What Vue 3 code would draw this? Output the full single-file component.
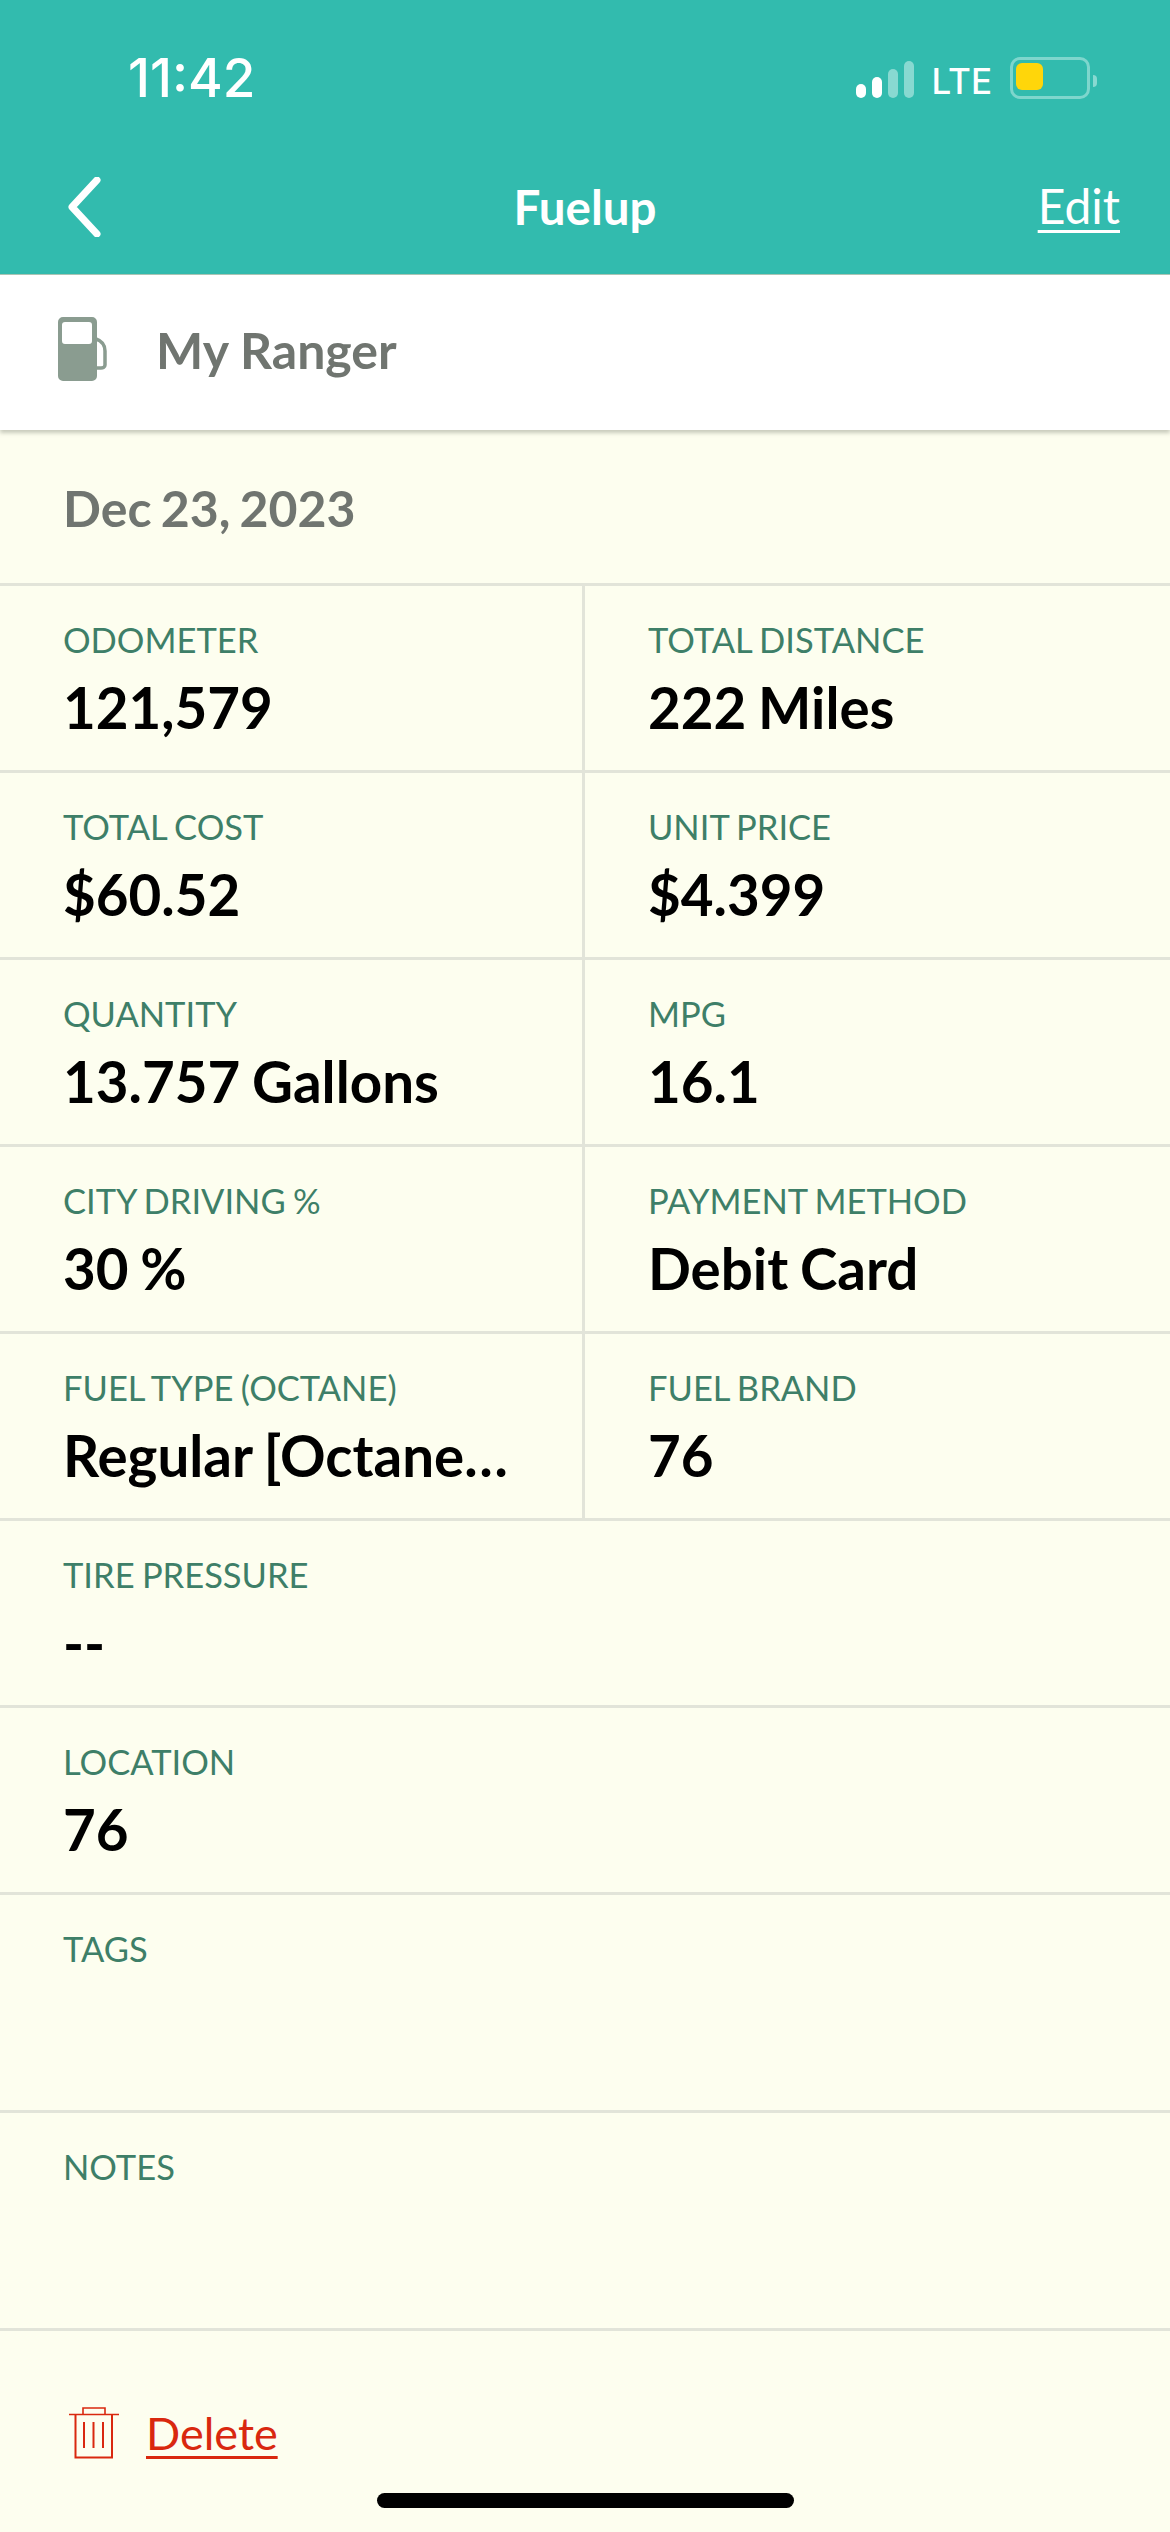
<script setup>
const pairs = [
  [{ l: 'ODOMETER', v: '121,579' }, { l: 'TOTAL DISTANCE', v: '222 Miles' }],
  [{ l: 'TOTAL COST', v: '$60.52' }, { l: 'UNIT PRICE', v: '$4.399' }],
  [{ l: 'QUANTITY', v: '13.757 Gallons' }, { l: 'MPG', v: '16.1' }],
  [{ l: 'CITY DRIVING %', v: '30 %' }, { l: 'PAYMENT METHOD', v: 'Debit Card' }],
  [{ l: 'FUEL TYPE (OCTANE)', v: 'Regular [Octane 87]' }, { l: 'FUEL BRAND', v: '76' }],
]
const singles = [
  { l: 'TIRE PRESSURE', v: '--' },
  { l: 'LOCATION', v: '76' },
]
const empties = ['TAGS', 'NOTES']
</script>

<template>
  <div class="page">
    <header class="top">
      <div class="status">
        <span class="time">11:42</span>
        <div class="indicators">
          <div class="signal">
            <i class="bar b1"></i>
            <i class="bar b2"></i>
            <i class="bar b3"></i>
            <i class="bar b4"></i>
          </div>
          <span class="lte">LTE</span>
          <div class="battery"><i class="charge"></i></div>
          <i class="nub"></i>
        </div>
      </div>
      <nav class="nav">
        <svg class="back" width="36" height="60" viewBox="0 0 36 60">
          <path d="M30 3 L5 30 L30 57" fill="none" stroke="#fff" stroke-width="7" stroke-linecap="round" stroke-linejoin="round" />
        </svg>
        <span class="title">Fuelup</span>
        <span class="edit">Edit</span>
      </nav>
    </header>

    <section class="vehicle">
      <svg class="pump" width="50" height="66" viewBox="0 0 50 66">
        <path fill="#8a9c90" fill-rule="evenodd" d="M5 0H34a5 5 0 0 1 5 5V59a5 5 0 0 1-5 5H5a5 5 0 0 1-5-5V5a5 5 0 0 1 5-5ZM7 5a3 3 0 0 0-3 3V24a3 3 0 0 0 3 3H31a3 3 0 0 0 3-3V8a3 3 0 0 0-3-3Z" />
        <path fill="none" stroke="#8a9c90" stroke-width="3.5" d="M38 22C44 24 47 28 47 34V48C47 50 45 51 43 51H38" />
      </svg>
      <span class="vname">My Ranger</span>
    </section>

    <section class="date">Dec 23, 2023</section>

    <div v-for="(row, i) in pairs" :key="i" class="row two">
      <div v-for="c in row" :key="c.l" class="cell">
        <div class="label">{{ c.l }}</div>
        <div class="value">{{ c.v }}</div>
      </div>
    </div>

    <div v-for="c in singles" :key="c.l" class="row">
      <div class="cell">
        <div class="label">{{ c.l }}</div>
        <div class="value">{{ c.v }}</div>
      </div>
    </div>

    <div v-for="l in empties" :key="l" class="row tall">
      <div class="cell">
        <div class="label">{{ l }}</div>
      </div>
    </div>

    <footer class="foot">
      <svg class="trash" width="52" height="52" viewBox="0 0 52 52">
        <g fill="none" stroke="#d9280f" stroke-width="1.6">
          <path d="M1 7.5H51M15 7.5V1H37V7.5" />
          <path d="M7.5 7.5V50.5H44V7.5" stroke-width="2" />
          <path d="M16 15V41M25.500 15V41M35 15V41" stroke-width="2" />
        </g>
      </svg>
      <span class="del">Delete</span>
    </footer>
    <div class="home"></div>
  </div>
</template>

<style scoped>
.page {
  position: relative;
  width: 1170px;
  height: 2532px;
  overflow: hidden;
  background: #fdfeef;
  font-family: Lato, "Open Sans", sans-serif;
}
.top {
  height: 274px;
  box-sizing: border-box;
  background: #32bbae;
  color: #fff;
  display: flex;
  flex-direction: column;
}
.status {
  height: 160px;
  box-sizing: border-box;
  padding: 48px 0 0 128px;
  display: flex;
  justify-content: space-between;
  align-items: flex-start;
}
.time {
  font-family: Inter, Roboto, sans-serif;
  font-weight: 500;
  font-size: 53px;
  line-height: 60px;
}
.indicators {
  display: flex;
  align-items: flex-end;
  margin-right: 73px;
  margin-top: 10px;
  height: 40px;
}
.signal {
  display: flex;
  align-items: flex-end;
  gap: 6px;
  margin-right: 18px;
  height: 37px;
}
.bar { display: block; width: 10px; border-radius: 5px; background: #fff; }
.b1 { height: 14px; }
.b2 { height: 21px; }
.b3 { height: 29px; background: #88d9d1; }
.b4 { height: 37px; background: #88d9d1; }
.lte {
  font-family: Inter, Roboto, sans-serif;
  font-weight: 500;
  font-size: 35px;
  line-height: 40px;
  margin-right: 18px;
  height: 37px;
}
.battery {
  border: 3px solid #7ed6cd;
  border-radius: 10px;
  padding: 3px;
  margin-bottom: -1px;
  box-sizing: content-box;
  width: 68px;
  height: 30px;
}
.charge {
  display: block;
  width: 27px;
  height: 27px;
  border-radius: 6px;
  background: #ffd60a;
}
.nub {
  display: block;
  width: 4px;
  height: 12px;
  margin: 0 0 11px 3px;
  background: #88d9d1;
  border-radius: 0 4px 4px 0;
}
.nav {
  position: relative;
  flex: 1;
  display: flex;
  align-items: center;
  justify-content: center;
  padding-bottom: 20px;
}
.back { position: absolute; left: 67px; top: 17px; }
.title { font-size: 47.500px; font-weight: 700; line-height: 56px; }
.edit {
  position: absolute;
  right: 50px;
  top: 18px;
  font-size: 48px;
  line-height: 56px;
  text-decoration: underline;
  text-underline-offset: 6px;
  text-decoration-thickness: 3px;
}
.vehicle {
  position: relative;
  z-index: 1;
  height: 156px;
  box-sizing: border-box;
  background: #fff;
  border-top: 1px solid #a9c4b4;
  padding-left: 58px;
  display: flex;
  align-items: center;
  box-shadow: 0 3px 4px rgba(120, 125, 110, 0.4);
}
.pump { margin-bottom: 6px; }
.vname {
  margin-left: 48px;
  font-size: 50px;
  font-weight: 700;
  color: #707570;
  margin-bottom: 5px;
}
.date {
  height: 153px;
  box-sizing: border-box;
  padding: 48px 0 0 63px;
  font-size: 50px;
  line-height: 60px;
  font-weight: 700;
  color: #707570;
  word-spacing: -3px;
}
.row {
  height: 187px;
  box-sizing: border-box;
  border-top: 3px solid #e2e4d9;
  display: flex;
}
.row.tall { height: 218px; }
.cell {
  flex: 1;
  min-width: 0;
  box-sizing: border-box;
  padding: 32px 63px 0;
}
.two .cell:first-child {
  flex: 0 0 585px;
  padding-right: 64px;
  border-right: 3px solid #e2e4d9;
}
.two .cell:last-child { padding-left: 63px; }
.label {
  font-size: 34.500px;
  line-height: 44px;
  color: #3e7f68;
  white-space: nowrap;
  word-spacing: -1.500px;
}
.value {
  font-size: 56.500px;
  line-height: 66px;
  font-weight: 700;
  color: #000;
  margin-top: 12px;
  white-space: nowrap;
  overflow: hidden;
  text-overflow: ellipsis;
  word-spacing: -2px;
}
.foot {
  border-top: 3px solid #e2e4d9;
  padding: 74px 0 0 68px;
  display: flex;
  align-items: center;
}
.del {
  margin-left: 26px;
  font-size: 45px;
  line-height: 56px;
  color: #d9280f;
  text-decoration: underline;
  text-underline-offset: 6px;
  text-decoration-thickness: 3px;
}
.home {
  position: absolute;
  left: 377px;
  top: 2493px;
  width: 417px;
  height: 15px;
  border-radius: 8px;
  background: #000;
}
</style>
